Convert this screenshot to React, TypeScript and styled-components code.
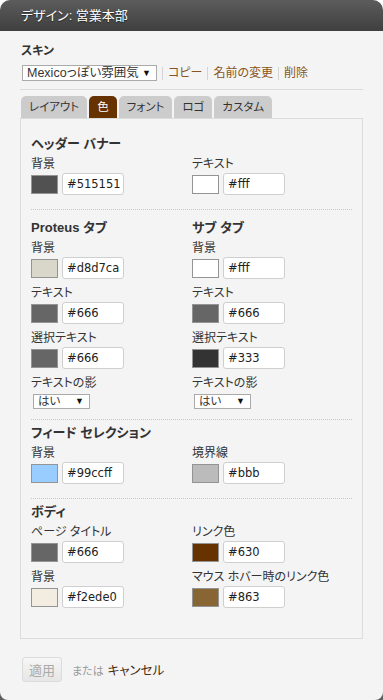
import React from "react";
import styled, { createGlobalStyle } from "styled-components";

const GlobalStyle = createGlobalStyle`
  html, body {
    margin: 0;
    padding: 0;
  }
  html {
    background: linear-gradient(to bottom, #ffffff 0, #ffffff 690px, #5e5e5e 690px);
  }
  body {
    font-family: "Liberation Sans", "Noto Sans CJK JP", sans-serif;
    font-feature-settings: "palt";
    color: #333;
  }
`;

type ColorField = { label: string; value: string };
type Column = { title: string; fields: ColorField[]; shadow?: boolean };
type Section = { columns: Column[]; pt: number; pb: number };

const sections: Section[] = [
  {
    pt: 3,
    pb: 14,
    columns: [
      { title: "ヘッダー バナー", fields: [{ label: "背景", value: "#515151" }] },
      { title: "", fields: [{ label: "テキスト", value: "#fff" }] },
    ],
  },
  {
    pt: 8,
    pb: 10,
    columns: [
      {
        title: "Proteus タブ",
        shadow: true,
        fields: [
          { label: "背景", value: "#d8d7ca" },
          { label: "テキスト", value: "#666" },
          { label: "選択テキスト", value: "#666" },
        ],
      },
      {
        title: "サブ タブ",
        shadow: true,
        fields: [
          { label: "背景", value: "#fff" },
          { label: "テキスト", value: "#666" },
          { label: "選択テキスト", value: "#333" },
        ],
      },
    ],
  },
  {
    pt: 3,
    pb: 14,
    columns: [
      { title: "フィード セレクション", fields: [{ label: "背景", value: "#99ccff" }] },
      { title: "", fields: [{ label: "境界線", value: "#bbb" }] },
    ],
  },
  {
    pt: 3,
    pb: 14,
    columns: [
      {
        title: "ボディ",
        fields: [
          { label: "ページ タイトル", value: "#666" },
          { label: "背景", value: "#f2ede0" },
        ],
      },
      {
        title: "",
        fields: [
          { label: "リンク色", value: "#630" },
          { label: "マウス ホバー時のリンク色", value: "#863" },
        ],
      },
    ],
  },
];

const tabs = ["レイアウト", "色", "フォント", "ロゴ", "カスタム"];

const Page = styled.div`
  width: 383px;
  min-height: 700px;
  background: #f4f4f4;
  border-radius: 10px 10px 8px 8px;
  overflow: hidden;
`;

const TitleBar = styled.div`
  height: 31px;
  background: linear-gradient(to bottom, #5c5c5c, #3f3f3f);
  color: #fff;
  font-size: 13px;
  line-height: 31px;
  padding-left: 21px;
  text-shadow: 0 1px 1px rgba(0, 0, 0, 0.5);
`;

const Body = styled.div`
  padding: 12px 20px 0;
`;

const SkinLabel = styled.div`
  font-size: 12px;
  font-weight: 600;
  line-height: 16px;
  padding-left: 1px;
  margin-bottom: 5px;
`;

const SkinRow = styled.div`
  display: flex;
  align-items: center;
  height: 18px;
  padding-left: 2px;
`;

const SkinSelect = styled.div`
  width: 129px;
  height: 14px;
  border: 1px solid #aaa;
  background: #fff;
  font-size: 12.5px;
  line-height: 14px;
  padding-left: 4px;
  box-sizing: content-box;
  display: flex;
  justify-content: space-between;
  white-space: nowrap;
`;

const Arrow = styled.span`
  font-size: 9px;
  padding-right: 5px;
  color: #111;
`;

const LinkItem = styled.a`
  color: #8a5420;
  font-size: 12px;
  text-decoration: none;
  padding: 0 5px;
  border-left: 1px solid #d4d4d4;
  line-height: 13px;
  &:first-of-type {
    margin-left: 5px;
  }
`;

const Rule = styled.div`
  height: 1px;
  background: #dcdcdc;
  margin-top: 7px;
`;

const TabBar = styled.div`
  display: flex;
  gap: 2px;
  padding-left: 1px;
  margin-top: 6px;
`;

const Tab = styled.div<{ $active?: boolean }>`
  height: 22px;
  line-height: 22px;
  padding: 0 8px;
  font-size: 11.5px;
  border-radius: 5px 5px 0 0;
  background: ${(p) => (p.$active ? "#663300" : "#cccccc")};
  color: ${(p) => (p.$active ? "#fff" : "#333")};
`;

const Panel = styled.div`
  border: 1px solid #dcdcdc;
  padding: 12px 10px 16px;
`;

const SectionBox = styled.div<{ $pt: number; $pb: number; $last?: boolean }>`
  display: grid;
  grid-template-columns: 161px 1fr;
  padding: ${(p) => p.$pt}px 0 ${(p) => p.$pb}px;
  border-bottom: ${(p) => (p.$last ? "none" : "1px dotted #c8c8c8")};
`;

const Col = styled.div`
  display: flex;
  flex-direction: column;
`;

const Heading = styled.div`
  font-size: 13px;
  font-weight: 600;
  line-height: 20px;
  height: 20px;
  margin-bottom: 2px;
  color: #333;
`;

const Fields = styled.div`
  display: flex;
  flex-direction: column;
  gap: 6px;
`;

const Field = styled.div`
  display: flex;
  flex-direction: column;
`;

const Label = styled.div`
  font-size: 12px;
  line-height: 16px;
  height: 16px;
  margin-bottom: 1px;
  color: #333;
`;

const ColorRow = styled.div`
  display: flex;
  align-items: center;
  gap: 4px;
`;

const Swatch = styled.div<{ $color: string }>`
  width: 25px;
  height: 17px;
  border: 1px solid #949494;
  background: ${(p) => p.$color};
`;

const HexInput = styled.div`
  width: 56px;
  height: 20px;
  border: 1px solid #cfcfcf;
  border-radius: 3px;
  background: #fff;
  font-family: "DejaVu Sans", sans-serif;
  font-size: 11.5px;
  line-height: 20px;
  padding-left: 4px;
  box-sizing: content-box;
  color: #222;
  white-space: nowrap;
`;

const ShadowSelect = styled.div`
  width: 51px;
  height: 13px;
  border: 1px solid #aaa;
  background: #fff;
  font-size: 11.5px;
  line-height: 13px;
  padding-left: 4px;
  margin: 2px 0 0 2px;
  display: flex;
  justify-content: space-between;
  box-sizing: content-box;
`;

const Footer = styled.div`
  display: flex;
  align-items: center;
  padding: 18px 0 0 2px;
`;

const ApplyButton = styled.button`
  width: 40px;
  height: 25px;
  border: 1px solid #dcdcdc;
  border-radius: 3px;
  background: linear-gradient(to bottom, #f6f6f6, #e6e6e6);
  color: #aaa;
  font-family: "Noto Sans CJK JP", sans-serif;
  font-size: 13px;
  padding: 0;
`;

const OrText = styled.span`
  font-size: 11px;
  color: #999;
  margin-left: 10px;
`;

const CancelLink = styled.a`
  font-size: 12.5px;
  color: #4a2a0c;
  margin-left: 4px;
  text-decoration: none;
`;

const ColorFieldView = ({ field }: { field: ColorField }) => (
  <Field>
    <Label>{field.label}</Label>
    <ColorRow>
      <Swatch $color={field.value} />
      <HexInput>{field.value}</HexInput>
    </ColorRow>
  </Field>
);

export default function App() {
  return (
    <>
      <GlobalStyle />
      <Page>
        <TitleBar>デザイン: 営業本部</TitleBar>
        <Body>
          <SkinLabel>スキン</SkinLabel>
          <SkinRow>
            <SkinSelect>
              Mexicoっぽい雰囲気
              <Arrow>▼</Arrow>
            </SkinSelect>
            <LinkItem href="#">コピー</LinkItem>
            <LinkItem href="#">名前の変更</LinkItem>
            <LinkItem href="#">削除</LinkItem>
          </SkinRow>
          <Rule />
          <TabBar>
            {tabs.map((t) => (
              <Tab key={t} $active={t === "色"}>
                {t}
              </Tab>
            ))}
          </TabBar>
          <Panel>
            {sections.map((s, i) => (
              <SectionBox key={i} $pt={s.pt} $pb={s.pb} $last={i === sections.length - 1}>
                {s.columns.map((c, j) => (
                  <Col key={j}>
                    <Heading>{c.title}</Heading>
                    <Fields>
                      {c.fields.map((f) => (
                        <ColorFieldView key={f.label} field={f} />
                      ))}
                      {c.shadow && (
                        <Field>
                          <Label>テキストの影</Label>
                          <ShadowSelect>
                            はい
                            <Arrow>▼</Arrow>
                          </ShadowSelect>
                        </Field>
                      )}
                    </Fields>
                  </Col>
                ))}
              </SectionBox>
            ))}
          </Panel>
          <Footer>
            <ApplyButton disabled>適用</ApplyButton>
            <OrText>または</OrText>
            <CancelLink href="#">キャンセル</CancelLink>
          </Footer>
        </Body>
      </Page>
    </>
  );
}
